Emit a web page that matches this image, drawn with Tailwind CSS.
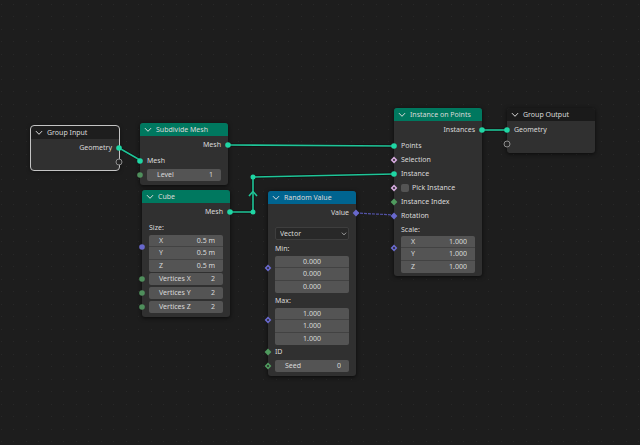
<!DOCTYPE html>
<html lang="en">
	<head>
		<meta charset="UTF-8" />
		<meta name="viewport" content="width=device-width, initial-scale=1.0" />
		<title>Geometry Nodes</title>
		<script src="https://cdn.jsdelivr.net/npm/@tailwindcss/browser@4"></script>
	</head>
	<body class="bg-[#1d1d1d] font-['Noto_Sans','Open_Sans',sans-serif] text-[7px] leading-3 text-[#dadada]">
		<!-- shared icons -->
		<svg class="hidden" xmlns="http://www.w3.org/2000/svg">
			<symbol id="chevron" viewBox="0 0 8 6">
				<path d="M1.2 1.4 4 4.3 6.8 1.4" fill="none" stroke="currentColor" stroke-width="1" stroke-linecap="round" />
			</symbol>
			<symbol id="circle" viewBox="0 0 8 8">
				<circle cx="4" cy="4" r="2.8" fill="currentColor" />
			</symbol>
			<symbol id="ring" viewBox="0 0 8 8">
				<circle cx="4" cy="4" r="3" fill="#262626" stroke="currentColor" stroke-width="1" />
			</symbol>
			<symbol id="diamond" viewBox="0 0 8 8">
				<path d="M4 .6 7.4 4 4 7.4.6 4Z" fill="currentColor" />
			</symbol>
			<symbol id="diamondDot" viewBox="0 0 8 8">
				<path d="M4 .6 7.4 4 4 7.4.6 4Z" fill="currentColor" />
				<circle cx="4" cy="4" r="1" fill="#262626" />
			</symbol>
		</svg>

		<main class="relative min-h-screen overflow-hidden">
			<!-- grid and links -->
			<svg class="absolute inset-0 h-full w-full" xmlns="http://www.w3.org/2000/svg">
				<defs>
					<pattern id="grid" width="25" height="25" patternUnits="userSpaceOnUse">
						<path d="M1 4h1v1h-1zM13 4h1v1h-1zM1 16h1v1h-1zM13 16h1v1h-1z" fill="#282828" />
					</pattern>
				</defs>
				<rect width="100%" height="100%" fill="url(#grid)" />
				<g fill="none" stroke="#111" stroke-width="3">
					<path d="M119 148 140 160M228 145 394 146M230 212H253V177L394 174M482 130H507" />
				</g>
				<g fill="none" stroke="#1fc598" stroke-width="1.6" stroke-linejoin="round">
					<path d="M119 148 140 160" />
					<path d="M228 145 394 146" />
					<path d="M230 212H253V177L394 174" />
					<path d="M249 196 253 191.5 257 196" />
					<path d="M482 130H507" />
				</g>
				<circle cx="253" cy="212" r="2.5" fill="#1fd6a4" />
				<circle cx="253" cy="177" r="2.5" fill="#1fd6a4" />
				<path d="M356 213 394 215" stroke="#5353a8" stroke-width="1.2" stroke-dasharray="3 1" />
			</svg>

			<!-- Group Input -->
			<section class="absolute top-[126px] left-[31px] w-[88px] rounded-[3px] bg-[#303030] pb-px shadow-[0_1px_4px_#000a] outline outline-[#c4c4c4]">
				<button class="flex h-[13px] w-full items-center gap-1 rounded-t-[3px] bg-[#1e1e1e] pl-1">
					<svg class="h-1.5 w-2"><use href="#chevron" /></svg>Group Input
				</button>
				<div class="relative mt-0.5 flex h-3.5 items-center justify-end px-[7px]">
					Geometry
					<svg class="absolute -right-1 size-2 text-[#1fd6a4]"><use href="#circle" /></svg>
				</div>
				<div class="relative flex h-3.5 items-center">
					<svg class="absolute -right-1 size-2 text-[#8c8c8c]"><use href="#ring" /></svg>
				</div>
			</section>

			<!-- Subdivide Mesh -->
			<section class="absolute top-[123px] left-[140px] w-[88px] rounded-[3px] bg-[#303030] pb-[3px] shadow-[0_1px_4px_#000a]">
				<button class="flex h-[13px] w-full items-center gap-1 rounded-t-[3px] bg-[#00785f] pl-1">
					<svg class="h-1.5 w-2"><use href="#chevron" /></svg>Subdivide Mesh
				</button>
				<div class="relative mt-0.5 flex h-3.5 items-center justify-end px-[7px]">
					Mesh
					<svg class="absolute -right-1 size-2 text-[#1fd6a4]"><use href="#circle" /></svg>
				</div>
				<div class="relative mt-0.5 flex h-3.5 items-center px-[7px]">
					<svg class="absolute -left-1 size-2 text-[#1fd6a4]"><use href="#circle" /></svg>
					Mesh
				</div>
				<div class="relative flex h-3.5 items-center px-[7px]">
					<svg class="absolute -left-1 size-2 text-[#4f8f5c]"><use href="#circle" /></svg>
					<label class="flex h-3 w-full items-center rounded-xs bg-[#545454] pr-2 pl-2.5">
						Level<input type="text" value="1" class="w-0 grow text-right" />
					</label>
				</div>
			</section>

			<!-- Cube -->
			<section class="absolute top-[190px] left-[142px] w-[88px] rounded-[3px] bg-[#303030] pb-[3px] shadow-[0_1px_4px_#000a]">
				<button class="flex h-[13px] w-full items-center gap-1 rounded-t-[3px] bg-[#00785f] pl-1">
					<svg class="h-1.5 w-2"><use href="#chevron" /></svg>Cube
				</button>
				<div class="relative mt-0.5 flex h-3.5 items-center justify-end px-[7px]">
					Mesh
					<svg class="absolute -right-1 size-2 text-[#1fd6a4]"><use href="#circle" /></svg>
				</div>
				<div class="mt-0.5 flex h-3.5 items-center px-[7px]">Size:</div>
				<div class="relative flex items-center px-[7px]">
					<svg class="absolute -left-1 top-2 size-2 text-[#6868cc]"><use href="#circle" /></svg>
					<div class="grid h-[37px] w-full grid-rows-3 divide-y divide-[#424242] rounded-xs bg-[#545454]">
						<label class="flex items-center pr-2 pl-2.5">X<input type="text" value="0.5 m" class="w-0 grow text-right" /></label>
						<label class="flex items-center pr-2 pl-2.5">Y<input type="text" value="0.5 m" class="w-0 grow text-right" /></label>
						<label class="flex items-center pr-2 pl-2.5">Z<input type="text" value="0.5 m" class="w-0 grow text-right" /></label>
					</div>
				</div>
				<div class="relative flex h-3.5 items-center px-[7px]">
					<svg class="absolute -left-1 size-2 text-[#4f8f5c]"><use href="#circle" /></svg>
					<label class="flex h-3 w-full items-center rounded-xs bg-[#545454] pr-2 pl-2.5">
						Vertices X<input type="text" value="2" class="w-0 grow text-right" />
					</label>
				</div>
				<div class="relative flex h-3.5 items-center px-[7px]">
					<svg class="absolute -left-1 size-2 text-[#4f8f5c]"><use href="#circle" /></svg>
					<label class="flex h-3 w-full items-center rounded-xs bg-[#545454] pr-2 pl-2.5">
						Vertices Y<input type="text" value="2" class="w-0 grow text-right" />
					</label>
				</div>
				<div class="relative flex h-3.5 items-center px-[7px]">
					<svg class="absolute -left-1 size-2 text-[#4f8f5c]"><use href="#circle" /></svg>
					<label class="flex h-3 w-full items-center rounded-xs bg-[#545454] pr-2 pl-2.5">
						Vertices Z<input type="text" value="2" class="w-0 grow text-right" />
					</label>
				</div>
			</section>

			<!-- Random Value -->
			<section class="absolute top-[191px] left-[268px] w-[88px] rounded-[3px] bg-[#303030] pb-[3px] shadow-[0_1px_4px_#000a]">
				<button class="flex h-[13px] w-full items-center gap-1 rounded-t-[3px] bg-[#006490] pl-1">
					<svg class="h-1.5 w-2"><use href="#chevron" /></svg>Random Value
				</button>
				<div class="relative mt-0.5 flex h-3.5 items-center justify-end px-[7px]">
					Value
					<svg class="absolute -right-1 size-2 text-[#6868cc]"><use href="#diamond" /></svg>
				</div>
				<div class="relative mx-[7px] mt-[7px] flex items-center">
					<select aria-label="Data type" class="h-[13px] w-full appearance-none rounded-xs border border-[#3e3e3e] bg-[#282828] pl-1">
						<option>Vector</option>
						<option>Float</option>
						<option>Integer</option>
						<option>Boolean</option>
					</select>
					<svg class="pointer-events-none absolute right-0.5 h-1 w-1.5"><use href="#chevron" /></svg>
				</div>
				<div class="mt-0.5 flex h-3.5 items-center px-[7px]">Min:</div>
				<div class="relative flex items-center px-[7px]">
					<svg class="absolute -left-1 top-2 size-2 text-[#6868cc]"><use href="#diamondDot" /></svg>
					<div class="grid h-[37px] w-full grid-rows-3 divide-y divide-[#424242] rounded-xs bg-[#545454]">
						<input type="text" aria-label="Min X" value="0.000" class="w-full text-center" />
						<input type="text" aria-label="Min Y" value="0.000" class="w-full text-center" />
						<input type="text" aria-label="Min Z" value="0.000" class="w-full text-center" />
					</div>
				</div>
				<div class="mt-px flex h-3.5 items-center px-[7px]">Max:</div>
				<div class="relative flex items-center px-[7px]">
					<svg class="absolute -left-1 top-2 size-2 text-[#6868cc]"><use href="#diamondDot" /></svg>
					<div class="grid h-[37px] w-full grid-rows-3 divide-y divide-[#424242] rounded-xs bg-[#545454]">
						<input type="text" aria-label="Max X" value="1.000" class="w-full text-center" />
						<input type="text" aria-label="Max Y" value="1.000" class="w-full text-center" />
						<input type="text" aria-label="Max Z" value="1.000" class="w-full text-center" />
					</div>
				</div>
				<div class="relative flex h-3.5 items-center px-[7px]">
					<svg class="absolute -left-1 size-2 text-[#4f9a5e]"><use href="#diamond" /></svg>
					ID
				</div>
				<div class="relative flex h-3.5 items-center px-[7px]">
					<svg class="absolute -left-1 size-2 text-[#4f9a5e]"><use href="#diamondDot" /></svg>
					<label class="flex h-3 w-full items-center rounded-xs bg-[#545454] pr-2 pl-2.5">
						Seed<input type="text" value="0" class="w-0 grow text-right" />
					</label>
				</div>
			</section>

			<!-- Instance on Points -->
			<section class="absolute top-[108px] left-[394px] w-[88px] rounded-[3px] bg-[#303030] pb-[3px] shadow-[0_1px_4px_#000a]">
				<button class="flex h-[13px] w-full items-center gap-1 rounded-t-[3px] bg-[#00785f] pl-1">
					<svg class="h-1.5 w-2"><use href="#chevron" /></svg>Instance on Points
				</button>
				<div class="relative mt-0.5 flex h-3.5 items-center justify-end px-[7px]">
					Instances
					<svg class="absolute -right-1 size-2 text-[#1fd6a4]"><use href="#circle" /></svg>
				</div>
				<div class="relative mt-0.5 flex h-3.5 items-center px-[7px]">
					<svg class="absolute -left-1 size-2 text-[#1fd6a4]"><use href="#circle" /></svg>
					Points
				</div>
				<div class="relative flex h-3.5 items-center px-[7px]">
					<svg class="absolute -left-1 size-2 text-[#d3a8dc]"><use href="#diamondDot" /></svg>
					Selection
				</div>
				<div class="relative flex h-3.5 items-center px-[7px]">
					<svg class="absolute -left-1 size-2 text-[#1fd6a4]"><use href="#circle" /></svg>
					Instance
				</div>
				<div class="relative flex h-3.5 items-center px-[7px]">
					<svg class="absolute -left-1 size-2 text-[#d3a8dc]"><use href="#diamondDot" /></svg>
					<label class="flex items-center gap-[3px]">
						<input type="checkbox" class="size-2 appearance-none rounded-xs bg-[#545454]" />Pick Instance
					</label>
				</div>
				<div class="relative flex h-3.5 items-center px-[7px]">
					<svg class="absolute -left-1 size-2 text-[#4f9a5e]"><use href="#diamond" /></svg>
					Instance Index
				</div>
				<div class="relative flex h-3.5 items-center px-[7px]">
					<svg class="absolute -left-1 size-2 text-[#6868cc]"><use href="#diamond" /></svg>
					Rotation
				</div>
				<div class="flex h-[13px] items-center px-[7px]">Scale:</div>
				<div class="relative flex items-center px-[7px]">
					<svg class="absolute -left-1 top-2 size-2 text-[#6868cc]"><use href="#diamondDot" /></svg>
					<div class="grid h-[37px] w-full grid-rows-3 divide-y divide-[#424242] rounded-xs bg-[#545454]">
						<label class="flex items-center pr-2 pl-2.5">X<input type="text" value="1.000" class="w-0 grow text-right" /></label>
						<label class="flex items-center pr-2 pl-2.5">Y<input type="text" value="1.000" class="w-0 grow text-right" /></label>
						<label class="flex items-center pr-2 pl-2.5">Z<input type="text" value="1.000" class="w-0 grow text-right" /></label>
					</div>
				</div>
			</section>

			<!-- Group Output -->
			<section class="absolute top-[108px] left-[507px] w-[88px] rounded-[3px] bg-[#303030] pb-0.5 shadow-[0_1px_4px_#000a]">
				<button class="flex h-[13px] w-full items-center gap-1 rounded-t-[3px] bg-[#1a1a1a] pl-1">
					<svg class="h-1.5 w-2"><use href="#chevron" /></svg>Group Output
				</button>
				<div class="relative mt-0.5 flex h-3.5 items-center px-[7px]">
					<svg class="absolute -left-1 size-2 text-[#1fd6a4]"><use href="#circle" /></svg>
					Geometry
				</div>
				<div class="relative flex h-3.5 items-center">
					<svg class="absolute -left-1 size-2 text-[#8c8c8c]"><use href="#ring" /></svg>
				</div>
			</section>
		</main>
	</body>
</html>
